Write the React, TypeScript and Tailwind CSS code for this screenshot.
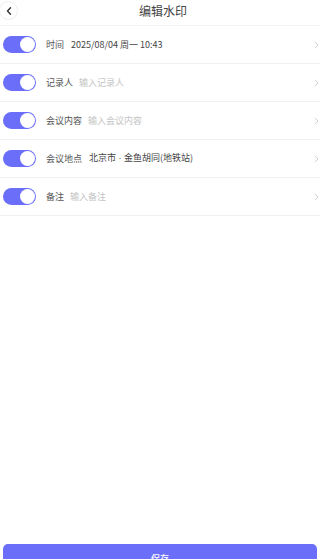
import React, { useState } from "react";

type Row = {
  label: string;
  value?: React.ReactNode;
  placeholder?: string;
};

const rows: Row[] = [
  { label: "时间", value: "2025/08/04 周一 10:43" },
  { label: "记录人", placeholder: "输入记录人" },
  { label: "会议内容", placeholder: "输入会议内容" },
  {
    label: "会议地点",
    value: (
      <>
        北京市<span style={{ fontFamily: '"Liberation Sans", sans-serif' }}> · </span>金鱼胡同(地铁站)
      </>
    ),
  },
  { label: "备注", placeholder: "输入备注" },
];

const Toggle = ({ on, onClick }: { on: boolean; onClick: () => void }) => (
  <button
    onClick={onClick}
    className={`relative w-[33px] h-[17px] rounded-full shrink-0 ${on ? "bg-[#6b6ef9]" : "bg-[#ddd]"}`}
  >
    <span
      className={`absolute top-[1px] w-[15px] h-[15px] rounded-full bg-white ${on ? "right-[1px]" : "left-[1px]"}`}
    />
  </button>
);

const App = () => {
  const [enabled, setEnabled] = useState(rows.map(() => true));

  return (
    <div
      className="h-[559px] w-full overflow-hidden bg-white flex flex-col"
      style={{ fontFamily: '"Noto Sans CJK SC", "Noto Sans", sans-serif' }}
    >
      {/* header */}
      <div className="relative h-[26px] shrink-0 flex items-center justify-center border-b border-[#f4f4f4]">
        <button className="absolute left-[-1px] top-[1px] w-[19px] h-[19px] rounded-full border border-[#eeeeee] flex items-center justify-center">
          <svg width="6" height="8" viewBox="0 0 6 8" fill="none">
            <path d="M4.5 0.8L1.5 4l3 3.2" stroke="#333" strokeWidth="1.4" strokeLinecap="round" strokeLinejoin="round" />
          </svg>
        </button>
        <span className="text-[12px] font-normal text-[#444] ml-[6px] -mt-[3px]">编辑水印</span>
      </div>

      {/* rows */}
      <div className="flex flex-col">
        {rows.map((row, i) => (
          <div
            key={row.label}
            className="h-[38px] flex items-center pl-[3px] pr-[1px] border-b border-[#f2f2f2]"
          >
            <Toggle
              on={enabled[i]}
              onClick={() => setEnabled(enabled.map((v, j) => (j === i ? !v : v)))}
            />
            <span className="ml-[10px] text-[9px] text-[#555]">{row.label}</span>
            {row.value ? (
              <span className="ml-[7px] text-[9px] text-[#444]">{row.value}</span>
            ) : (
              <span className="ml-[6px] text-[9px] text-[#c4c4c4]">{row.placeholder}</span>
            )}
            <svg className="ml-auto" width="5" height="8" viewBox="0 0 5 8" fill="none">
              <path d="M1 1l3 3-3 3" stroke="#cfcfcf" strokeWidth="1" strokeLinecap="round" strokeLinejoin="round" />
            </svg>
          </div>
        ))}
      </div>

      <div className="flex-1" />

      <button className="mx-[3px] h-[32px] -mb-[17px] shrink-0 rounded-[5px] bg-[#6b6ef9] text-white text-[9px] font-medium flex items-start justify-center pt-[8px]">
        保存
      </button>
    </div>
  );
};

export default App;
